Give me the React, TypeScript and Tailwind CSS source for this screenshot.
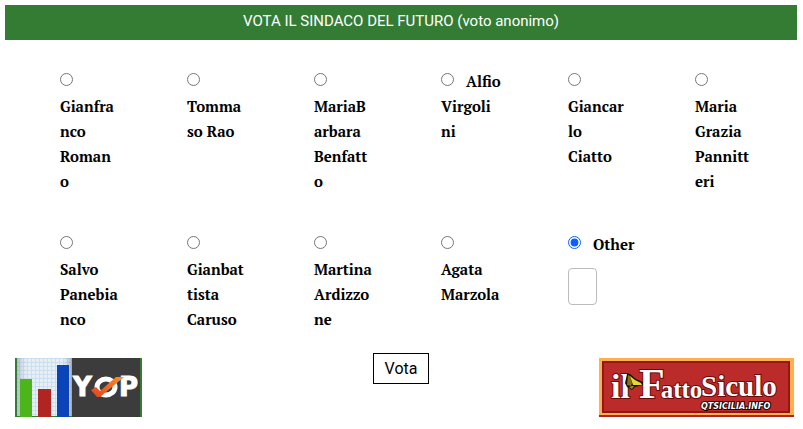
import { Fragment, useState } from "react";

type Candidate = {
  id: string;
  lines: string[];
  inline?: boolean;
};

const candidates: Candidate[] = [
  { id: "romano", lines: ["Gianfra", "nco", "Roman", "o"] },
  { id: "rao", lines: ["Tomma", "so Rao"] },
  { id: "benfatto", lines: ["MariaB", "arbara", "Benfatt", "o"] },
  { id: "virgolini", lines: ["Alfio", "Virgoli", "ni"], inline: true },
  { id: "ciatto", lines: ["Giancar", "lo", "Ciatto"] },
  { id: "pannitteri", lines: ["Maria", "Grazia", "Pannitt", "eri"] },
  { id: "panebianco", lines: ["Salvo", "Panebia", "nco"] },
  { id: "caruso", lines: ["Gianbat", "tista", "Caruso"] },
  { id: "ardizzone", lines: ["Martina", "Ardizzo", "ne"] },
  { id: "marzola", lines: ["Agata", "Marzola"] },
  { id: "other", lines: ["Other"], inline: true },
];

function YopLogo() {
  return (
    <svg width="127" height="59" viewBox="0 0 127 59" role="img" aria-label="YOP">
      <defs>
        <pattern id="paper" width="4" height="4" patternUnits="userSpaceOnUse">
          <rect width="4" height="4" fill="#e6edf3" />
          <path d="M0 .5H4M.5 0V4" stroke="#c6dbed" strokeWidth="1" />
        </pattern>
        <linearGradient id="shade" x1="0" x2="1" y1="0" y2="0">
          <stop offset="0" stopColor="#556677" stopOpacity=".35" />
          <stop offset=".2" stopColor="#fff" stopOpacity=".1" />
          <stop offset=".8" stopColor="#fff" stopOpacity=".1" />
          <stop offset="1" stopColor="#556677" stopOpacity=".45" />
        </linearGradient>
        <linearGradient id="tick" x1="0" x2="1" y1="1" y2="0">
          <stop offset="0" stopColor="#e83f1c" />
          <stop offset="1" stopColor="#f5912b" />
        </linearGradient>
      </defs>
      <rect width="127" height="59" fill="#347c34" />
      <rect x="2" width="55" height="58" fill="url(#paper)" />
      <rect x="2" width="55" height="58" fill="url(#shade)" />
      <rect x="57" width="68" height="59" fill="#3c3c3c" />
      <rect x="5" y="21" width="12" height="38" fill="#4cb51b" />
      <rect x="23" y="31" width="13" height="28" fill="#b02422" />
      <rect x="42" y="7" width="12" height="52" fill="#0b43b8" />
      <g
        fill="#fff"
        stroke="#fff"
        strokeWidth="1"
        fontFamily="'DejaVu Sans', sans-serif"
        fontWeight="700"
        fontSize="26"
      >
        <text x="58" y="38">Y</text>
        <text x="104" y="38">P</text>
      </g>
      <ellipse cx="91" cy="29" rx="9" ry="8" fill="none" stroke="#fff" strokeWidth="5" />
      <path d="M76 32L81 29L85 33L101 19H109L85 39H82Z" fill="url(#tick)" />
    </svg>
  );
}

function FattoSiculoLogo() {
  return (
    <svg width="195" height="59" viewBox="0 0 195 59" role="img" aria-label="il FattoSiculo">
      <rect width="195" height="59" fill="#b02222" />
      <rect width="195" height="57" fill="#ffb04d" />
      <rect x="3" y="3" width="188" height="52" fill="#981313" />
      <rect x="5" y="5" width="184" height="48" fill="#ba2b29" />
      <g
        fill="#fff"
        stroke="#6d0909"
        strokeWidth="2"
        paintOrder="stroke"
        fontFamily="'Liberation Serif', serif"
        fontWeight="700"
      >
        <text x="12" y="40" fontSize="34">il</text>
        <text x="40" y="40" fontSize="42">
          F<tspan dx="-4" fontSize="25">atto</tspan>
        </text>
        <text x="102" y="38" fontSize="29">Siculo</text>
      </g>
      <path d="M28 16H31L37 21L44 24V27L36 29L33 32L28 29L26 25Z" fill="#17130a" />
      <path d="M29 17L31 18L33 25L32 28L28 27Z" fill="#8c7014" />
      <path d="M31 18L36 22L42 25L43 27L34 27Z" fill="#ead534" />
      <path d="M33 28L35 28L33 31L30 29Z" fill="#a98919" />
      <text
        x="102"
        y="51"
        fill="#fff"
        stroke="#160404"
        strokeWidth="2"
        paintOrder="stroke"
        fontFamily="'DejaVu Sans', sans-serif"
        fontWeight="700"
        fontStyle="italic"
        fontSize="8"
      >
        QTSICILIA.INFO
      </text>
    </svg>
  );
}

export default function App() {
  const [choice, setChoice] = useState("other");
  const [other, setOther] = useState("");

  return (
    <form
      className="bg-white pt-[5px] pr-[6px] pl-[5px] font-[Roboto,sans-serif] text-base text-black"
      onSubmit={(event) => event.preventDefault()}
    >
      <fieldset>
        <legend className="w-full bg-[#347c34] pt-1 pb-[7px] text-center text-[15px] leading-6 text-white">
          VOTA IL SINDACO DEL FUTURO (voto anonimo)
        </legend>
        <div className="grid grid-cols-6 gap-y-[38px] px-[15px] pt-[29px]">
          {candidates.map(({ id, lines, inline }) => (
            <div key={id} className="pl-10">
              <div className="font-['PT_Serif','Liberation_Serif',serif] text-[15px] leading-[25px] font-bold whitespace-nowrap">
                <input
                  type="radio"
                  name="candidate"
                  id={id}
                  value={id}
                  checked={choice === id}
                  onChange={() => setChoice(id)}
                  className="mt-1 mr-3 size-[13px] align-top accent-[#0a60ff]"
                />
                <label htmlFor={id}>
                  {lines.map((line, index) => (
                    <Fragment key={line}>
                      {(index > 0 || !inline) && <br />}
                      {line}
                    </Fragment>
                  ))}
                </label>
              </div>
              {id === "other" && (
                <input
                  type="text"
                  aria-label="Other"
                  value={other}
                  onChange={(event) => setOther(event.target.value)}
                  className="mt-[11px] block h-[37px] w-[29px] rounded border border-[#bbb] px-1"
                />
              )}
            </div>
          ))}
        </div>
      </fieldset>
      <div className="grid grid-cols-[1fr_auto_1fr] items-start pt-[21px]">
        <a href="#yop" className="mt-[5px] ml-[10px] block w-fit">
          <YopLogo />
        </a>
        <button type="submit" className="h-[31px] w-14 border border-black bg-white text-base leading-6">
          Vota
        </button>
        <a href="#fattosiculo" className="mt-[5px] mr-[3px] block w-fit justify-self-end">
          <FattoSiculoLogo />
        </a>
      </div>
    </form>
  );
}
